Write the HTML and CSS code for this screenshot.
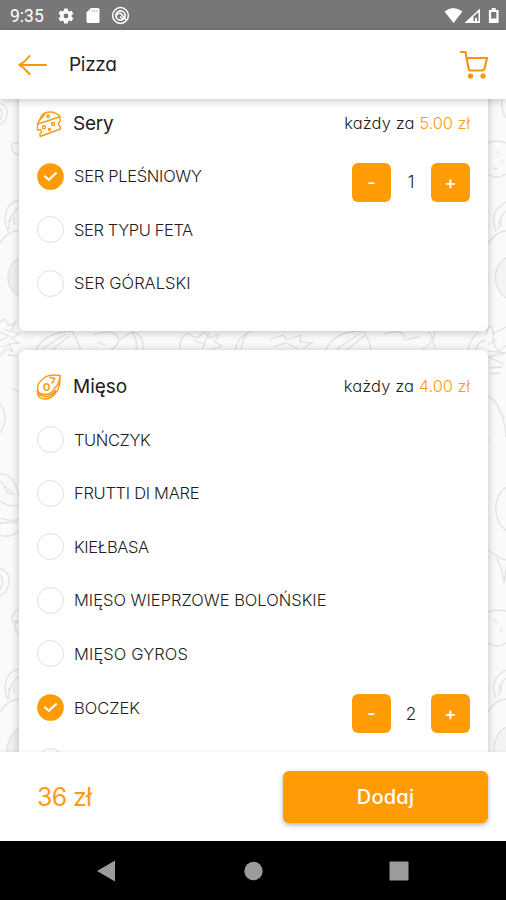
FILE: index.html
```html
<!DOCTYPE html>
<html lang="pl">
<head>
<meta charset="utf-8">
<title>Pizza</title>
<link rel="stylesheet" href="styles.css">
</head>
<body>
<svg class="defs" width="0" height="0">
  <symbol id="check" viewBox="0 0 28 28"><circle cx="14" cy="14" r="13.8" fill="#ff9b05"/><path d="M7.500 13.200l4.800 4.200 8-7.600" fill="none" stroke="#fff" stroke-width="2.200"/></symbol>
</svg>
<div class="phone">
  <div class="status">
    <span class="time">9:35</span>
    <svg class="gear" width="18" height="18" viewBox="0 0 24 24"><path fill="#fff" fill-rule="evenodd" d="M19.4 13c.1-.3.1-.6.1-1s0-.7-.1-1l2.1-1.6c.2-.2.2-.4.1-.6l-2-3.5c-.1-.2-.4-.3-.6-.2l-2.500 1c-.5-.4-1.100-.7-1.700-1l-.4-2.600c0-.2-.2-.4-.5-.4h-4c-.2 0-.5.2-.5.4L9 5.100c-.6.3-1.200.6-1.700 1l-2.500-1c-.2-.1-.5 0-.6.2l-2 3.500c-.1.2-.1.500.1.600L4.500 11a8 8 0 0 0 0 2l-2.200 1.600c-.2.2-.2.400-.1.600l2 3.500c.1.200.4.300.6.200l2.500-1c.5.400 1.100.7 1.700 1l.4 2.600c0 .2.300.4.500.4h4c.3 0 .5-.2.500-.4l.4-2.600c.6-.3 1.200-.6 1.700-1l2.500 1c.2.100.5 0 .6-.2l2-3.500c.1-.2.100-.4-.1-.6zM12 15.200a3.200 3.200 0 1 1 0-6.400 3.200 3.200 0 0 1 0 6.400z"/></svg>
    <svg class="sd" width="14" height="17" viewBox="0 0 14 17"><path fill="#fff" d="M5 1h7q1.500 0 1.500 1.500v12q0 1.500-1.500 1.500H2Q.5 16 .5 14.500v-9z"/><path d="M6 3v2M8.500 3v2M11 3v2" stroke="#b5b5b5" stroke-width="1"/></svg>
    <svg class="at" width="19" height="19" viewBox="0 0 19 19" fill="none" stroke="#fff"><circle cx="9.500" cy="9.500" r="7.900" stroke-width="1.500"/><circle cx="9.500" cy="9.500" r="4.600" stroke-width="1.700"/><path d="M5.500 9.500c1-3 4.500-3 5.500-.5l4 5M9 10.500l3 2.500" stroke-width="1.600"/></svg>
    <span class="grow"></span>
    <svg width="56" height="18" viewBox="0 0 56 18"><path fill="#fff" d="M1.500 4.500Q10-2.500 19.500 4.500L10.500 16zM37 1.500V16H21.500z"/><path fill="#777" d="M30.500 9.500l5-4.500V14h-5z"/><path fill="#fff" d="M32 11h2v3h-2z"/><path d="M47 4h7.500v11H47z" fill="none" stroke="#fff" stroke-width="2.200"/><path d="M48.700 1h4v2h-4zM47 11.500h7V16h-7z" fill="#fff"/></svg>
  </div>
  <header class="bar">
    <svg class="back" width="30" height="22" viewBox="0 0 30 22" fill="none" stroke="#fc9608" stroke-width="2" stroke-linecap="round" stroke-linejoin="round"><path d="M28 11H2M11.500 2Q7 8 1.500 11q5 3 10 9"/></svg>
    <h1>Pizza</h1>
    <span class="grow"></span>
    <svg class="cart" width="31" height="30" viewBox="0 0 31 30" fill="none" stroke="#f7930d" stroke-width="2.200" stroke-linecap="round" stroke-linejoin="round"><path d="M3 2h4.500L10.500 18q.5 2.500 2 2.500h11.500q2 0 2.700-2.500L29 8H8.500"/><circle cx="12.500" cy="26" r="1.500" fill="#f7930d"/><circle cx="25" cy="26" r="1.500" fill="#f7930d"/></svg>
  </header>
  <main class="content">
    <svg class="doodles" width="506" height="653" viewBox="0 99 506 653" fill="none" stroke="#e2e2e2" stroke-width="1.300">
      <path d="M0 103q8 3 7 11t-7 11M0 108q4 5 0 12M12 144q5-3 8 0M12 145q-2 7 7 10"/>
      <path d="M20 200C5 202 2 219 8 231M20 206q-10 7-12 25M0 243Q8 230 20 231M14 217v8M8 222l6-9"/>
      <path fill="#f0f0f0" d="M20 257C5 266 3 287 20 297z"/>
      <path d="M0 322q5-5 7 1t9-2l-5 10 9 3-9 4 8 5-10 1 4 8-7-4-6 8M0 332l9 4-9 5M3 329l7 2M1 347l10-3M8 355l10 1M12 388l8 5M0 403q10 15 0 30"/>
      <path d="M0 474q17-2 20 31Q10 508 0 501M0 481l14 14M4 486q2 9 8 8M0 518q12 4 20 1v11q-10 9-20 5M0 523l18-1M0 568q10 4 9 14t-9 14M0 574q5 8 0 16M20 608q-11 7-7 14l6-1q-9 5 1 14"/>
      <path d="M20 669C5 671 2 687 8 700M20 675q-10 7-12 25M0 712q8-13 20-13M14 686v8M8 691l6-9"/>
      <path fill="#f0f0f0" d="M20 727Q7 735 7 754h13z"/>
      <path d="M506 118q-5-7-4-19M488 143q8-4 18 0M488 174q9 6 18 0M496 151l2 3M501 160l2 2M493 168l4 1M506 202C492 209 492 220 496 232M506 211q-7 5-8 19M488 244q8-13 18-13M501 217v10"/>
      <path fill="#f4f4f4" d="M507 257C492 266 491 287 507 299z"/>
      <path d="M486 334q3-10 6-7l1 7 13-7M488 345l9-6M494 331q-3 14 5 20l8-6M488 351l18 2-18 4 16 7M490 368l12-1M491 374l9-1M488 397c10 2 17 22 18 40M498 406q1 8 7 11M489 440h2"/>
      <path d="M507 487c-15 7-15 35 0 44M488 551c10 3 8 8 18 9M496 558q6 8 8 25l3-20M488 612q8-3 18-1M488 643q9 6 18 0M494 620l3 2M500 630l2 2M506 670C492 677 492 687 496 699M506 678q-7 5-8 19M488 712q8-13 18-13M501 685v9"/>
      <path fill="#f4f4f4" d="M507 727q-14 6-13 27h13z"/>
      <path d="M36 350Q43 333 72 331q6 10 9 19M42 349l24-15M52 350l17-14M93 335q22-8 26 5l13-8q12 2 11 18M97 342l8 3M119 340q-2 7-9 10M131 332q7 6 5 18M180 350q-2-10 7-17l9 5 9-6 5 6 9-4-4 8 7 4-12 4M193 340l13 5M209 333l-7 16M235 350q3-14 17-19M241 350q1-10 7-18M269 340l14-5 4 5 14-5-1 7 12 1-9 5M273 347l13-4 13 6M326 350q7-19 37-19 7 9 8 19M337 349l22-15M347 350l17-14M383 335q20-9 22 5l14-3M421 350q12-5 14-19M435 349q-1-9-6-17M468 350q2-11 10-17M476 350q1-8 10-10"/>
    </svg>
    <section class="card">
      <div class="head">
        <svg class="icon" width="26" height="28" viewBox="0 0 26 28" fill="none" stroke="#fb9a17" stroke-width="1.400" stroke-linejoin="round"><path d="M1.500 14L6 5q3-3 8-3 6 0 10 4.500v5q-3 1.500-1 3.500t1.500 4L4 26.500v-3q2.500-1.500 1-3.500H1.500zM2 14l22.500-7.500M3 11l6-7"/><circle cx="12" cy="6.300" r="1.300"/><circle cx="8" cy="17.300" r="1.500"/><circle cx="17" cy="14" r="1.500"/><circle cx="13.500" cy="19.500" r="1"/></svg>
        <h2 class="sery">Sery</h2><p>każdy za <b>5.00 zł</b></p>
      </div>
      <div class="row"><svg class="mark"><use href="#check"/></svg><span class="tight">SER PLEŚNIOWY</span><div class="stepper"><button>-</button><i>1</i><button>+</button></div></div>
      <div class="row"><em class="mark"></em><span class="tighter">SER TYPU FETA</span></div>
      <div class="row"><em class="mark"></em><span>SER GÓRALSKI</span></div>
    </section>
    <section class="card">
      <div class="head">
        <svg class="icon" width="26" height="28" viewBox="0 0 26 28" fill="none" stroke="#fb9a17" stroke-width="1.500" stroke-linejoin="round" stroke-linecap="round"><path d="M24 2.500Q13 .8 7.500 5.500 1 10 1.500 16q.5 5 7 5.500 7 0 10-6 5.500-5 5.500-13zM1.500 16v4q1 6 7 6 7 0 11-6 5-5 4.500-17.500M2.500 20q3 4 8 3.500 6-1 9-6M14 4.500l5 1M18 6q0 3-2 4"/><ellipse cx="10.500" cy="14" rx="2.600" ry="3.300"/></svg>
        <h2>Mięso</h2><p>każdy za <b>4.00 zł</b></p>
      </div>
      <div class="row"><em class="mark"></em><span class="tighter">TUŃCZYK</span></div>
      <div class="row"><em class="mark"></em><span class="tight">FRUTTI DI MARE</span></div>
      <div class="row"><em class="mark"></em><span class="tighter">KIEŁBASA</span></div>
      <div class="row"><em class="mark"></em><span>MIĘSO WIEPRZOWE BOLOŃSKIE</span></div>
      <div class="row"><em class="mark"></em><span class="wide">MIĘSO GYROS</span></div>
      <div class="row"><svg class="mark"><use href="#check"/></svg><span>BOCZEK</span><div class="stepper"><button>-</button><i>2</i><button>+</button></div></div>
      <div class="row"><em class="mark"></em></div>
    </section>
  </main>
  <footer class="order"><strong>36 zł</strong><button>Dodaj</button></footer>
  <nav>
    <svg width="506" height="59" viewBox="0 0 506 59" fill="#9b9b9b"><path d="M97 30l18-10.500v21z"/><circle cx="253.500" cy="30" r="9.200"/><rect x="389.500" y="20.500" width="19" height="19" rx="1"/></svg>
  </nav>
</div>
</body>
</html>
```
FILE: styles.css
```css
* { box-sizing: border-box; }
body { margin: 0; font-family: Inter, "Noto Sans", sans-serif; font-feature-settings: "cv11"; color: #241c20; }
h1, h2, p { margin: 0; font-weight: 400; }
b, i, em { font-weight: inherit; font-style: normal; }
button { border: 0; padding: 0; color: #fff; background: #ff9b05; font: inherit; font-feature-settings: inherit; }
.defs { position: absolute; }
.phone { width: 506px; height: 900px; display: flex; flex-direction: column; overflow: hidden; background: #fff; }
.grow { flex: 1; }
.status { flex: none; height: 30px; display: flex; align-items: center; padding: 1px 7px 0 10px; background: #777; color: #fff; }
.time { width: 47px; font: 17.5px Roboto, sans-serif; }
.sd { margin-left: 11px; }
.at { margin-left: 11px; }
.bar { flex: none; height: 69px; display: flex; align-items: center; padding: 0 17px 0 18px; background: #fff; box-shadow: 0 2px 8px rgba(0,0,0,.22); z-index: 2; }
.bar h1 { margin-left: 21px; font-size: 19px; letter-spacing: -.3px; }
.content { position: relative; height: 653px; overflow: hidden; padding: 0 18px 0 19px; background: #fafafa; }
.doodles { position: absolute; left: 0; top: 0; }
.card { position: relative; padding: 10.5px 18px 21px; background: #fff; border-radius: 6px; box-shadow: 0 1px 8px rgba(0,0,0,.24); margin-bottom: 19px; }
.card:first-of-type { margin-top: -12px; }
.head { height: 52px; display: flex; align-items: center; }
.icon { margin-right: 11px; margin-left: -1px; }
.head h2 { font-size: 19px; }
.head h2.sery { letter-spacing: -.2px; }
.head p { margin-left: auto; margin-top: -1px; font-size: 16.5px; font-weight: 300; letter-spacing: .1px; }
.head b { color: #ff9b15; letter-spacing: -.1px; }
.row { height: 53.6px; display: flex; align-items: center; font-size: 16.5px; font-weight: 300; }
.tight { letter-spacing: -.3px; }
.tighter { letter-spacing: -.4px; }
.wide { letter-spacing: .1px; }
.mark { width: 27px; height: 27px; margin-right: 10px; flex: none; }
em.mark { border: 1.5px solid #dedede; border-radius: 50%; }
.stepper { margin-left: auto; margin-top: 12px; display: flex; align-items: center; }
.stepper button { width: 39px; height: 39px; border-radius: 6px; font-size: 18px; font-weight: 500; }
.stepper i { width: 40px; text-align: center; font-size: 17px; }
.order { flex: none; height: 89px; display: flex; align-items: center; justify-content: space-between; padding: 0 18px 0 37px; background: #fff; box-shadow: 0 -1px 3px rgba(0,0,0,.06); z-index: 1; }
.order strong { color: #ff9b15; font-size: 25px; font-weight: 400; letter-spacing: -.7px; }
.order button { width: 205px; height: 52px; border-radius: 6px; font-size: 20px; font-weight: 500; letter-spacing: .2px; box-shadow: 0 2px 5px rgba(0,0,0,.3); }
nav { flex: none; height: 59px; background: #000; }
nav svg { display: block; }
```
